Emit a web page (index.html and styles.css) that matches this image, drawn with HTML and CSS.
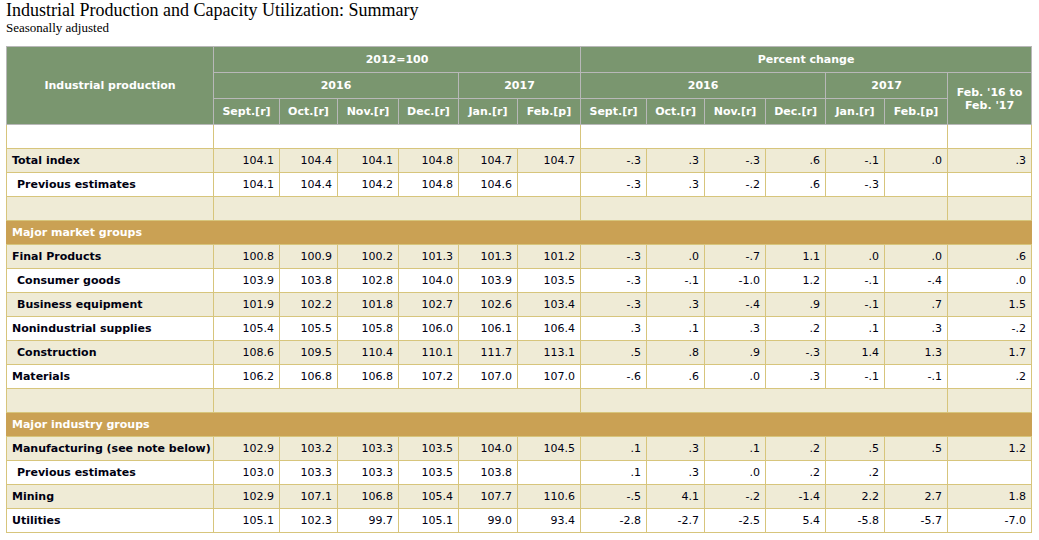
FILE: index.html
```html
<!DOCTYPE html>
<html>
<head>
<meta charset="utf-8">
<title>Industrial Production and Capacity Utilization: Summary</title>
<link rel="stylesheet" href="styles.css">
</head>
<body>
<h1 class="title">Industrial Production and Capacity Utilization: Summary</h1>
<div class="subtitle">Seasonally adjusted</div>
<table class="ip">
  <colgroup>
    <col class="c0"><col class="c1"><col class="c2"><col class="c3"><col class="c4"><col class="c5"><col class="c6">
    <col class="c7"><col class="c8"><col class="c9"><col class="c10"><col class="c11"><col class="c12"><col class="c13">
  </colgroup>
  <thead>
    <tr class="h">
      <th rowspan="3">Industrial production</th>
      <th colspan="6">2012=100</th>
      <th colspan="7">Percent change</th>
    </tr>
    <tr class="h">
      <th colspan="4">2016</th>
      <th colspan="2">2017</th>
      <th colspan="4">2016</th>
      <th colspan="2">2017</th>
      <th rowspan="2" class="wrap">Feb. '16 to<br>Feb. '17</th>
    </tr>
    <tr class="h">
      <th>Sept.[r]</th><th>Oct.[r]</th><th>Nov.[r]</th><th>Dec.[r]</th><th>Jan.[r]</th><th>Feb.[p]</th>
      <th>Sept.[r]</th><th>Oct.[r]</th><th>Nov.[r]</th><th>Dec.[r]</th><th>Jan.[r]</th><th>Feb.[p]</th>
    </tr>
  </thead>
  <tbody>
    <tr class="white"><td></td><td colspan="6"></td><td colspan="6"></td><td></td></tr>
    <tr class="beige"><td class="lbl">Total index</td><td>104.1</td><td>104.4</td><td>104.1</td><td>104.8</td><td>104.7</td><td>104.7</td><td>-.3</td><td>.3</td><td>-.3</td><td>.6</td><td>-.1</td><td>.0</td><td>.3</td></tr>
    <tr class="white"><td class="lbl ind">Previous estimates</td><td>104.1</td><td>104.4</td><td>104.2</td><td>104.8</td><td>104.6</td><td></td><td>-.3</td><td>.3</td><td>-.2</td><td>.6</td><td>-.3</td><td></td><td></td></tr>
    <tr class="beige"><td></td><td colspan="6"></td><td colspan="6"></td><td></td></tr>
    <tr class="section"><td colspan="14">Major market groups</td></tr>
    <tr class="beige"><td class="lbl">Final Products</td><td>100.8</td><td>100.9</td><td>100.2</td><td>101.3</td><td>101.3</td><td>101.2</td><td>-.3</td><td>.0</td><td>-.7</td><td>1.1</td><td>.0</td><td>.0</td><td>.6</td></tr>
    <tr class="white"><td class="lbl ind">Consumer goods</td><td>103.9</td><td>103.8</td><td>102.8</td><td>104.0</td><td>103.9</td><td>103.5</td><td>-.3</td><td>-.1</td><td>-1.0</td><td>1.2</td><td>-.1</td><td>-.4</td><td>.0</td></tr>
    <tr class="beige"><td class="lbl ind">Business equipment</td><td>101.9</td><td>102.2</td><td>101.8</td><td>102.7</td><td>102.6</td><td>103.4</td><td>-.3</td><td>.3</td><td>-.4</td><td>.9</td><td>-.1</td><td>.7</td><td>1.5</td></tr>
    <tr class="white"><td class="lbl">Nonindustrial supplies</td><td>105.4</td><td>105.5</td><td>105.8</td><td>106.0</td><td>106.1</td><td>106.4</td><td>.3</td><td>.1</td><td>.3</td><td>.2</td><td>.1</td><td>.3</td><td>-.2</td></tr>
    <tr class="beige"><td class="lbl ind">Construction</td><td>108.6</td><td>109.5</td><td>110.4</td><td>110.1</td><td>111.7</td><td>113.1</td><td>.5</td><td>.8</td><td>.9</td><td>-.3</td><td>1.4</td><td>1.3</td><td>1.7</td></tr>
    <tr class="white"><td class="lbl">Materials</td><td>106.2</td><td>106.8</td><td>106.8</td><td>107.2</td><td>107.0</td><td>107.0</td><td>-.6</td><td>.6</td><td>.0</td><td>.3</td><td>-.1</td><td>-.1</td><td>.2</td></tr>
    <tr class="beige"><td></td><td colspan="6"></td><td colspan="6"></td><td></td></tr>
    <tr class="section"><td colspan="14">Major industry groups</td></tr>
    <tr class="beige"><td class="lbl">Manufacturing (see note below)</td><td>102.9</td><td>103.2</td><td>103.3</td><td>103.5</td><td>104.0</td><td>104.5</td><td>.1</td><td>.3</td><td>.1</td><td>.2</td><td>.5</td><td>.5</td><td>1.2</td></tr>
    <tr class="white"><td class="lbl ind">Previous estimates</td><td>103.0</td><td>103.3</td><td>103.3</td><td>103.5</td><td>103.8</td><td></td><td>.1</td><td>.3</td><td>.0</td><td>.2</td><td>.2</td><td></td><td></td></tr>
    <tr class="beige"><td class="lbl">Mining</td><td>102.9</td><td>107.1</td><td>106.8</td><td>105.4</td><td>107.7</td><td>110.6</td><td>-.5</td><td>4.1</td><td>-.2</td><td>-1.4</td><td>2.2</td><td>2.7</td><td>1.8</td></tr>
    <tr class="white"><td class="lbl">Utilities</td><td>105.1</td><td>102.3</td><td>99.7</td><td>105.1</td><td>99.0</td><td>93.4</td><td>-2.8</td><td>-2.7</td><td>-2.5</td><td>5.4</td><td>-5.8</td><td>-5.7</td><td>-7.0</td></tr>
  </tbody>
</table>
</body>
</html>
```

FILE: styles.css
```css
html, body {
  margin: 0;
  padding: 0;
  background: #ffffff;
}
body {
  padding: 0 6px;
  color: #000000;
}
.title {
  margin: 0;
  font-family: "Liberation Serif", "Times New Roman", serif;
  font-weight: normal;
  font-size: 18px;
  line-height: 21px;
}
.subtitle {
  font-family: "Liberation Serif", "Times New Roman", serif;
  font-size: 13px;
  line-height: 13px;
  margin-bottom: 12px;
}
.ip {
  border-collapse: collapse;
  table-layout: fixed;
  width: 1025px;
  font-family: "DejaVu Sans", Verdana, sans-serif;
  font-size: 11px;
  color: #000011;
}
.c0 { width: 207px; }
.c1 { width: 66px; }
.c2 { width: 58px; }
.c3 { width: 61px; }
.c4 { width: 60px; }
.c5 { width: 59px; }
.c6 { width: 63px; }
.c7 { width: 66px; }
.c8 { width: 58px; }
.c9 { width: 61px; }
.c10 { width: 60px; }
.c11 { width: 59px; }
.c12 { width: 63px; }
.c13 { width: 84px; }
.ip th {
  background: #7a966f;
  color: #ffffff;
  font-weight: bold;
  text-align: center;
  vertical-align: middle;
  border: 1px solid #b8b8b8;
  height: 24px;
  padding: 1px 3px 0;
  line-height: 14px;
}
.ip th.wrap {
  line-height: 13px;
}
.ip td {
  border: 1px solid #d7c57c;
  height: 22px;
  padding: 1px 5px 0;
  line-height: 14px;
  text-align: right;
  vertical-align: middle;
  white-space: nowrap;
}
.ip td.lbl {
  text-align: left;
  font-weight: bold;
  padding-left: 5px;
}
.ip td.ind {
  padding-left: 10px;
}
.white td { background: #ffffff; }
.beige td { background: #efebd6; }
.section td {
  background: #caa154;
  color: #ffffff;
  font-weight: bold;
  text-align: left;
  border-left-color: #caa154;
  border-right-color: #caa154;
}
```
